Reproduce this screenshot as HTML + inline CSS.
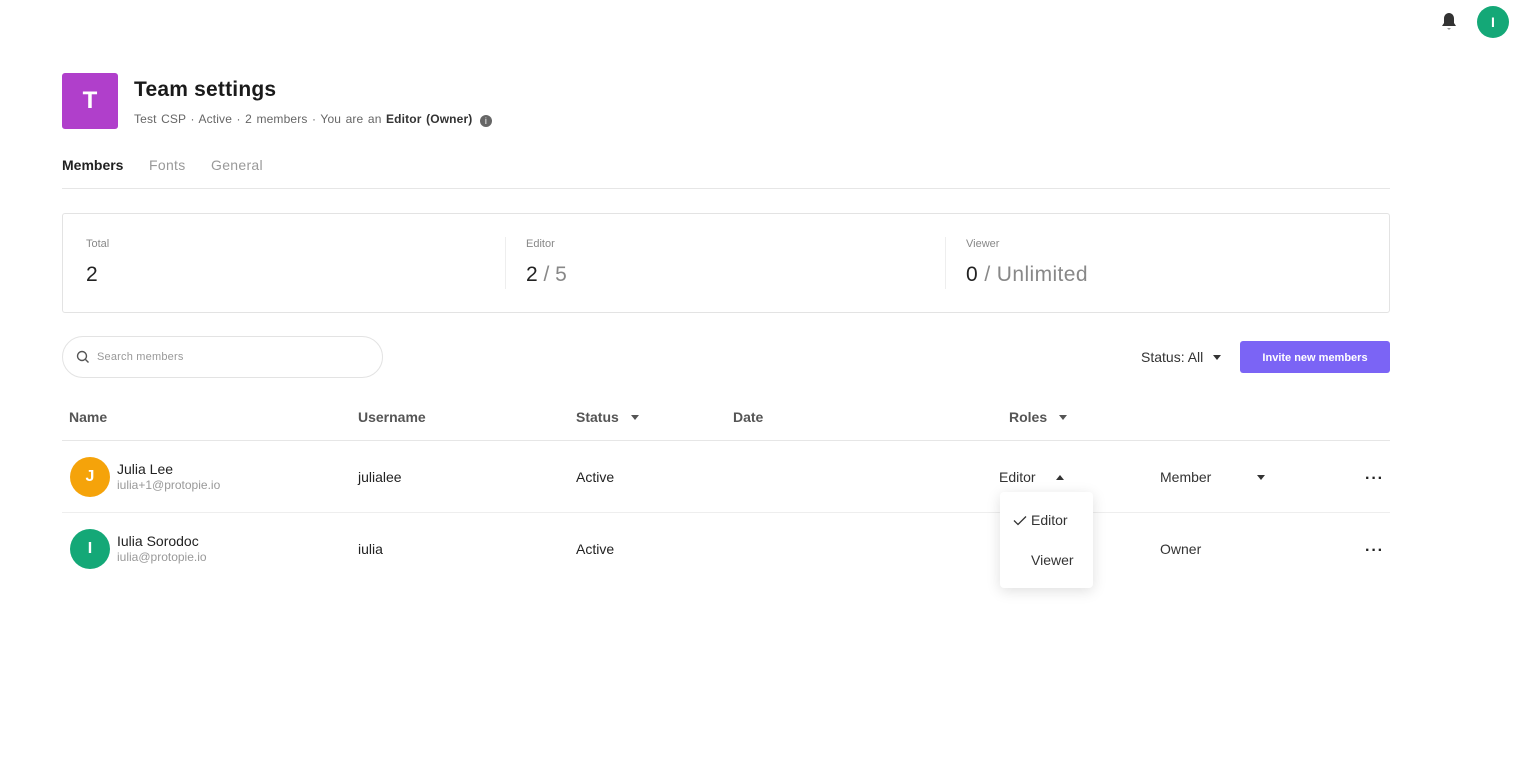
<!DOCTYPE html><html><head><style>
*{box-sizing:border-box;margin:0;padding:0}
body{width:1518px;height:772px;background:#fff;font-family:"Liberation Sans",sans-serif;color:#222;position:relative;overflow:hidden}
.a{position:absolute;white-space:nowrap}
.gray{color:#888}
.av{position:absolute;border-radius:50%;color:#fff;font-weight:bold;text-align:center}
.tri{display:inline-block;width:0;height:0;border-left:4px solid transparent;border-right:4px solid transparent;border-top:5px solid #333}
.triu{display:inline-block;width:0;height:0;border-left:4px solid transparent;border-right:4px solid transparent;border-bottom:5px solid #333}
.dots{position:absolute;font-size:16px;letter-spacing:1px;font-weight:bold}
</style></head><body>
<svg class="a" style="left:1440px;top:12px" width="18" height="19" viewBox="0 0 18 19"><path d="M9 1c-3 0-5 2.5-5 5.5V11L2 14h14l-2-3V6.5C14 3.5 12 1 9 1z" fill="#333"/><path d="M7 16h4l-2 2z" fill="#999"/></svg>
<div class="av" style="left:1477px;top:6px;width:32px;height:32px;line-height:32px;background:#14a877;font-size:14px">I</div>
<div class="a" style="left:62px;top:73px;width:56px;height:56px;background:#b03fcb;border-radius:3px;color:#fff;font-size:24px;font-weight:bold;text-align:center;line-height:56px">T</div>
<div class="a" style="left:134px;top:78px;font-size:21px;font-weight:bold;color:#1a1a1a;letter-spacing:0.2px">Team settings</div>
<div class="a" style="left:134px;top:112px;font-size:12px;color:#666;letter-spacing:0.15px;word-spacing:1px">Test CSP · Active · 2 members · You are an <b style="color:#333">Editor (Owner)</b> <span style="display:inline-block;width:12px;height:12px;border-radius:50%;background:#666;color:#fff;font-size:9px;text-align:center;line-height:12px;vertical-align:-1px;margin-left:3px">i</span></div>
<div class="a" style="left:62px;top:157px;font-size:14px;font-weight:bold;color:#222">Members</div>
<div class="a" style="left:149px;top:157px;font-size:14px;color:#999;letter-spacing:0.3px">Fonts</div>
<div class="a" style="left:211px;top:157px;font-size:14px;color:#999;letter-spacing:0.3px">General</div>
<div class="a" style="left:62px;top:188px;width:1328px;height:1px;background:#e6e6e6"></div>
<div class="a" style="left:62px;top:213px;width:1328px;height:100px;border:1px solid #e3e3e3;border-radius:3px"></div>
<div class="a" style="left:505px;top:237px;width:1px;height:52px;background:#eee"></div>
<div class="a" style="left:945px;top:237px;width:1px;height:52px;background:#eee"></div>
<div class="a gray" style="left:86px;top:238px;font-size:11px">Total</div>
<div class="a" style="left:86px;top:263px;font-size:21px">2</div>
<div class="a gray" style="left:526px;top:238px;font-size:11px">Editor</div>
<div class="a" style="left:526px;top:263px;font-size:21px">2 <span class="gray">/ 5</span></div>
<div class="a gray" style="left:966px;top:238px;font-size:11px">Viewer</div>
<div class="a" style="left:966px;top:263px;font-size:21px;letter-spacing:0.4px">0 <span class="gray">/ Unlimited</span></div>
<div class="a" style="left:62px;top:336px;width:321px;height:42px;border:1px solid #e3e3e3;border-radius:21px"></div>
<svg class="a" style="left:76px;top:350px" width="14" height="14" viewBox="0 0 14 14"><circle cx="6" cy="6" r="4.5" fill="none" stroke="#555" stroke-width="1.4"/><path d="M9.5 9.5l3 3" stroke="#555" stroke-width="1.4"/></svg>
<div class="a" style="left:97px;top:351px;font-size:11px;color:#999;letter-spacing:0.2px">Search members</div>
<div class="a" style="left:1141px;top:349px;font-size:14px;color:#333">Status: All <span class="tri" style="margin-left:6px;vertical-align:2px"></span></div>
<div class="a" style="left:1240px;top:341px;width:150px;height:32px;background:#7b64f5;border-radius:3px;color:#fff;font-size:11px;font-weight:bold;text-align:center;line-height:34px">Invite new members</div>
<div class="a" style="left:69px;top:409px;font-size:14px;font-weight:bold;color:#555">Name</div>
<div class="a" style="left:358px;top:409px;font-size:14px;font-weight:bold;color:#555">Username</div>
<div class="a" style="left:576px;top:409px;font-size:14px;font-weight:bold;color:#555">Status <span class="tri" style="margin-left:8px;vertical-align:2px;border-top-color:#555"></span></div>
<div class="a" style="left:733px;top:409px;font-size:14px;font-weight:bold;color:#555">Date</div>
<div class="a" style="left:1009px;top:409px;font-size:14px;font-weight:bold;color:#555">Roles <span class="tri" style="margin-left:8px;vertical-align:2px;border-top-color:#555"></span></div>
<div class="a" style="left:62px;top:440px;width:1328px;height:1px;background:#e6e6e6"></div>
<div class="a" style="left:62px;top:512px;width:1328px;height:1px;background:#eee"></div>
<div class="av" style="left:70px;top:457px;width:40px;height:40px;line-height:40px;background:#f5a30a;font-size:16px">J</div>
<div class="a" style="left:117px;top:461px;font-size:14px">Julia Lee</div>
<div class="a gray" style="left:117px;top:478px;font-size:12px;color:#999">iulia+1@protopie.io</div>
<div class="a" style="left:358px;top:469px;font-size:14px">julialee</div>
<div class="a" style="left:576px;top:469px;font-size:14px">Active</div>
<div class="a" style="left:999px;top:469px;font-size:14px;color:#333">Editor <span class="triu" style="margin-left:17px;vertical-align:2px"></span></div>
<div class="a" style="left:1160px;top:469px;font-size:14px;color:#333">Member</div>
<span class="tri a" style="left:1257px;top:475px"></span>
<div class="dots" style="left:1365px;top:470px">···</div>
<div class="av" style="left:70px;top:529px;width:40px;height:40px;line-height:40px;background:#14a877;font-size:16px">I</div>
<div class="a" style="left:117px;top:533px;font-size:14px">Iulia Sorodoc</div>
<div class="a" style="left:117px;top:550px;font-size:12px;color:#999">iulia@protopie.io</div>
<div class="a" style="left:358px;top:541px;font-size:14px">iulia</div>
<div class="a" style="left:576px;top:541px;font-size:14px">Active</div>
<div class="a" style="left:1160px;top:541px;font-size:14px;color:#333">Owner</div>
<div class="dots" style="left:1365px;top:542px">···</div>
<div class="a" style="left:1000px;top:492px;width:93px;height:96px;background:#fff;border-radius:4px;box-shadow:0 3px 14px rgba(0,0,0,.13)"></div>
<svg class="a" style="left:1013px;top:515px" width="14" height="11" viewBox="0 0 14 11"><path d="M1 5.5l4 4 8-8" fill="none" stroke="#333" stroke-width="1.3"/></svg>
<div class="a" style="left:1031px;top:512px;font-size:14px;color:#333">Editor</div>
<div class="a" style="left:1031px;top:552px;font-size:14px;color:#333">Viewer</div>
</body></html>
